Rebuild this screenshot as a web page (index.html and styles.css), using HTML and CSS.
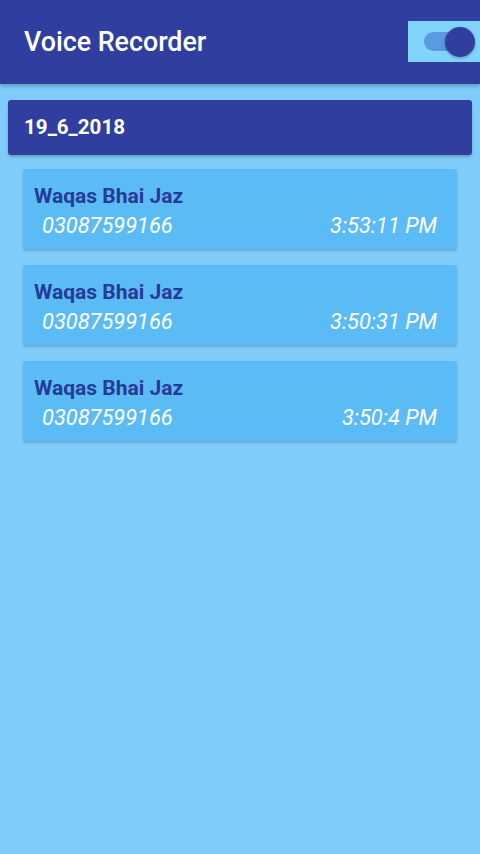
FILE: index.html
```html
<!DOCTYPE html>
<html lang="en">
<head>
<meta charset="utf-8">
<title>Voice Recorder</title>
<link rel="stylesheet" href="styles.css">
</head>
<body>
<header class="appbar">
  <h1 class="title">Voice Recorder</h1>
  <div class="switch-box">
    <div class="switch">
      <span class="track"></span>
      <span class="thumb"></span>
    </div>
  </div>
</header>
<main class="content">
  <div class="date-card">19_6_2018</div>
  <ul class="calls">
    <li class="call">
      <div class="name">Waqas Bhai Jaz</div>
      <div class="meta"><span class="number">03087599166</span><span class="time">3:53:11 PM</span></div>
    </li>
    <li class="call">
      <div class="name">Waqas Bhai Jaz</div>
      <div class="meta"><span class="number">03087599166</span><span class="time">3:50:31 PM</span></div>
    </li>
    <li class="call">
      <div class="name">Waqas Bhai Jaz</div>
      <div class="meta"><span class="number">03087599166</span><span class="time">3:50:4 PM</span></div>
    </li>
  </ul>
</main>
</body>
</html>
```
FILE: styles.css
```css
* { box-sizing: border-box; }
html, body { margin: 0; padding: 0; }
body {
  width: 480px;
  height: 854px;
  background: #7fcbf9;
  font-family: Roboto, "Noto Sans", sans-serif;
  overflow: hidden;
}
.appbar {
  height: 84px;
  background: #303f9f;
  display: flex;
  align-items: center;
  justify-content: space-between;
  padding-left: 24px;
  box-shadow: 0 2px 4px rgba(0,0,0,0.25);
  position: relative;
  z-index: 1;
}
.title {
  margin: 0 0 1px 0;
  color: #ffffff;
  font-size: 26.8px;
  font-weight: 500;
  letter-spacing: 0;
}
.switch-box {
  width: 72px;
  height: 41px;
  background: #81d4fa;
  display: flex;
  align-items: center;
  padding-left: 16px;
  margin-top: -1px;
}
.switch {
  position: relative;
  width: 52px;
  height: 30px;
  display: flex;
  align-items: center;
}
.track {
  width: 36px;
  height: 19px;
  border-radius: 10px;
  background: #5a9ae0;
}
.thumb {
  position: absolute;
  left: 21px;
  top: 0;
  width: 30px;
  height: 30px;
  border-radius: 50%;
  background: #303f9f;
  box-shadow: 0 1px 3px rgba(0,0,0,0.35);
}
.content {
  padding: 16px 8px 0 8px;
}
.date-card {
  height: 55px;
  background: #303f9f;
  border-radius: 3px;
  color: #ffffff;
  font-weight: 700;
  font-size: 20.6px;
  padding-left: 16px;
  padding-bottom: 1px;
  display: flex;
  align-items: center;
  box-shadow: 0 2px 3px rgba(0,0,0,0.2);
}
.calls {
  list-style: none;
  margin: 14px 0 0 0;
  padding: 0 15px;
  display: flex;
  flex-direction: column;
  gap: 16px;
}
.call {
  height: 80px;
  background: #5bbcf5;
  border-radius: 2px;
  box-shadow: 0 2px 2px rgba(0,0,0,0.15);
  padding: 13px 20px 0 11px;
}
.name {
  color: #27399a;
  font-weight: 700;
  font-size: 21px;
  line-height: 29px;
}
.meta {
  display: flex;
  justify-content: space-between;
  padding-left: 8px;
  color: #ffffff;
  font-style: italic;
  font-size: 21.8px;
  line-height: 29px;
}
```
